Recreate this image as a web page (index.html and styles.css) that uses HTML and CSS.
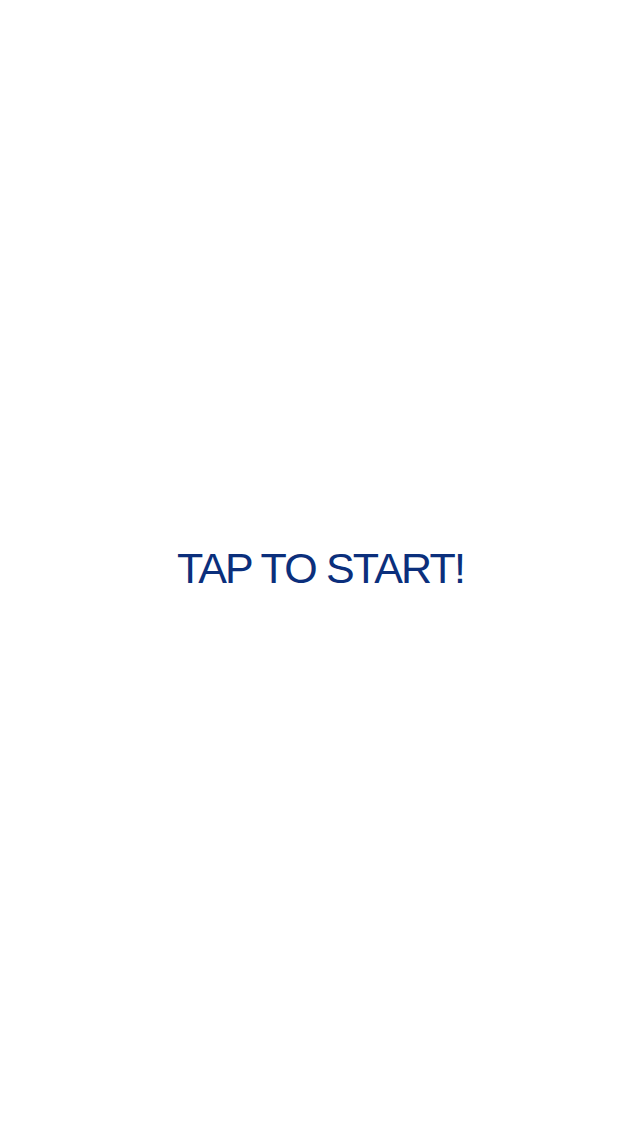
FILE: index.html
```html
<!DOCTYPE html>
<html>
<head>
<meta charset="utf-8">
<link rel="stylesheet" href="styles.css">
</head>
<body>
<main class="screen">
  <div class="start">TAP TO START!</div>
</main>
</body>
</html>
```

FILE: styles.css
```css
html, body {
  margin: 0;
  padding: 0;
  background: #ffffff;
}
.screen {
  width: 640px;
  height: 1138px;
  display: flex;
  align-items: center;
  justify-content: center;
}
.start {
  font-family: "Liberation Sans", Arial, sans-serif;
  font-size: 43px;
  color: #0b2f7c;
  letter-spacing: -1.8px;
  line-height: 1;
  padding-bottom: 2px;
  padding-left: 1px;
}
```
